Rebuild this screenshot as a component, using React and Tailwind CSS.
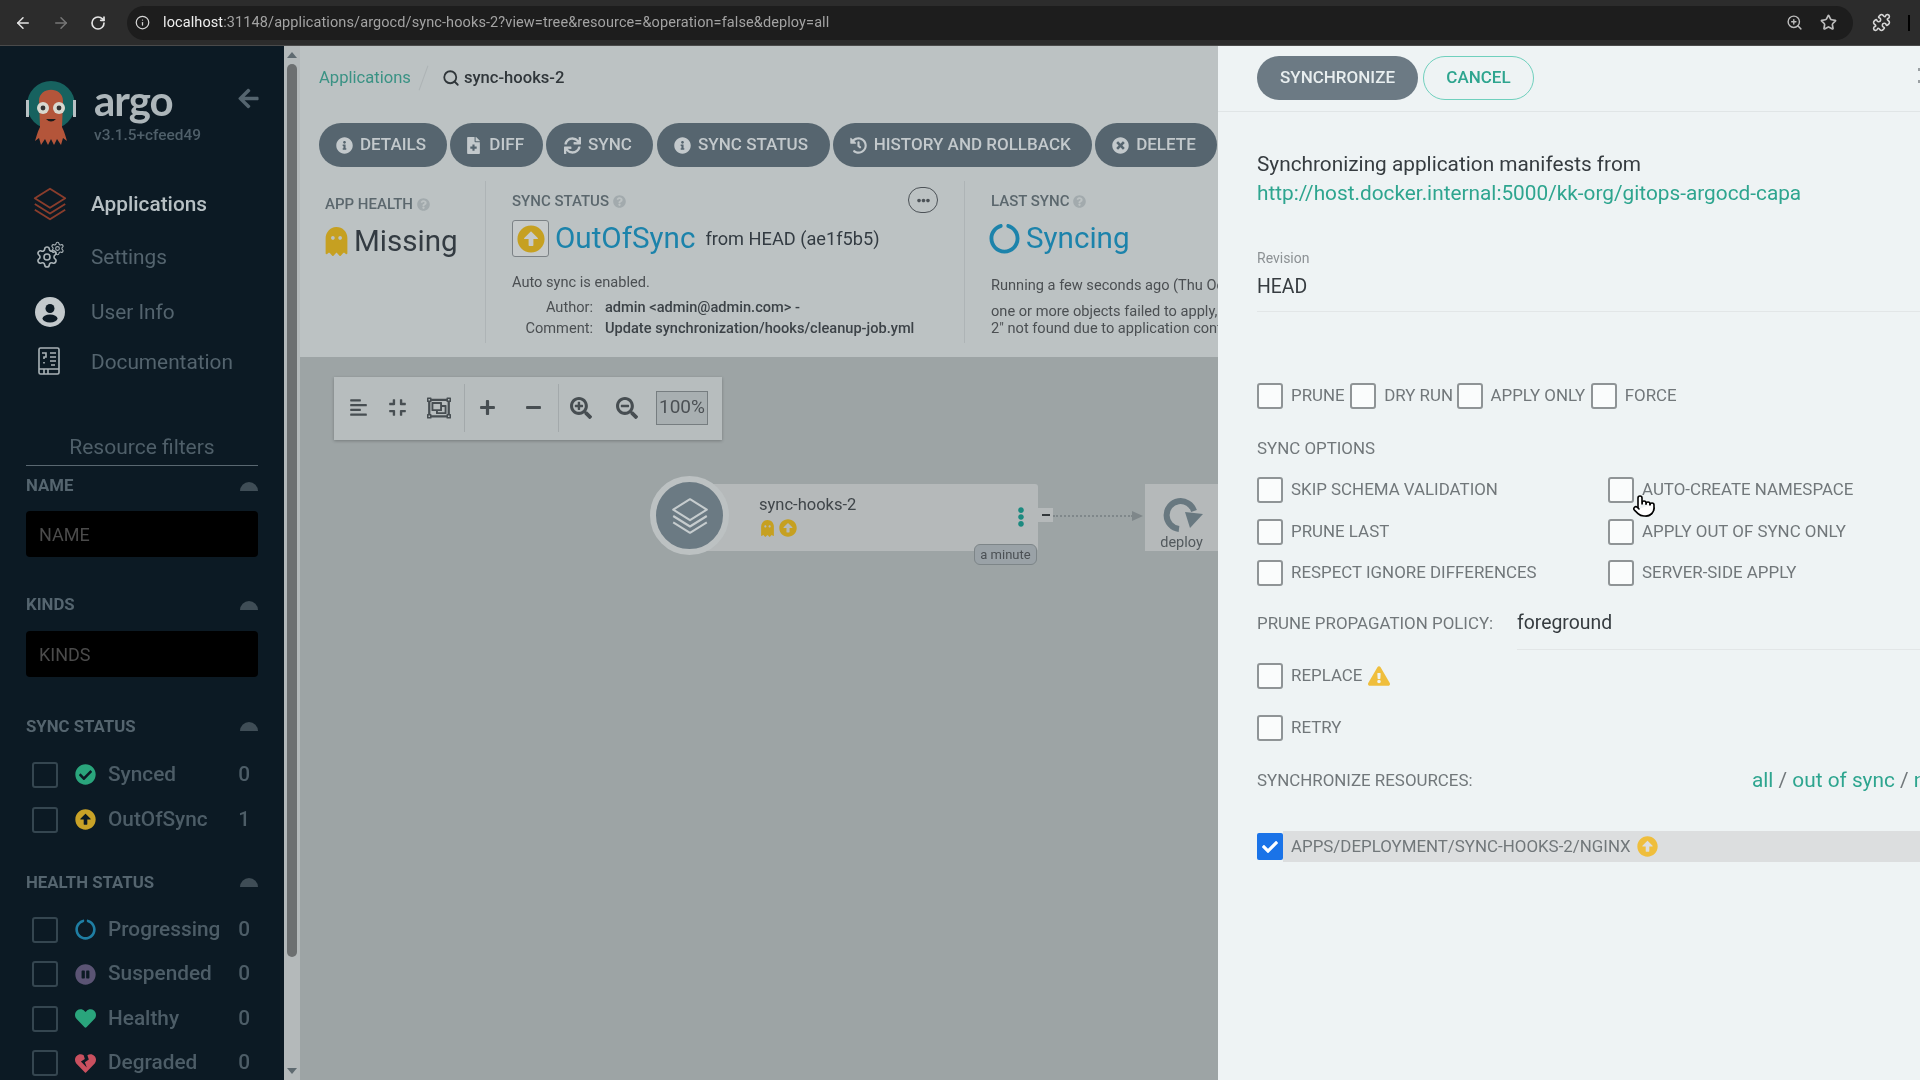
import { ArrowLeft, ArrowRight, RotateCw, Info, ZoomIn, Star, Puzzle, Search, Settings, Pointer } from 'lucide-react'
import {
  FaAlignLeft,
  FaArrowAltCircleUp,
  FaArrowLeft,
  FaCheckCircle,
  FaCheck,
  FaCircleNotch,
  FaCompress,
  FaEllipsisH,
  FaEllipsisV,
  FaExclamationTriangle,
  FaFileMedical,
  FaGhost,
  FaHeart,
  FaHeartBroken,
  FaHistory,
  FaInfoCircle,
  FaMinus,
  FaPauseCircle,
  FaPlus,
  FaQuestionCircle,
  FaRegObjectGroup,
  FaSearchMinus,
  FaSearchPlus,
  FaSync,
  FaTimesCircle,
} from 'react-icons/fa'

const ACTIONS = [
  { label: 'DETAILS', icon: FaInfoCircle, width: 'w-[128px]' },
  { label: 'DIFF', icon: FaFileMedical, width: 'w-[93px]' },
  { label: 'SYNC', icon: FaSync, width: 'w-[107px]' },
  { label: 'SYNC STATUS', icon: FaInfoCircle, width: 'w-[173px]' },
  { label: 'HISTORY AND ROLLBACK', icon: FaHistory, width: 'w-[259px]' },
  { label: 'DELETE', icon: FaTimesCircle, width: 'w-[122px]' },
]

const SYNC_FILTERS = [
  { label: 'Synced', count: 0, icon: FaCheckCircle, color: 'text-[#2aa57c]' },
  { label: 'OutOfSync', count: 1, icon: FaArrowAltCircleUp, color: 'text-[#c9a227]' },
]

const HEALTH_FILTERS = [
  { label: 'Progressing', count: 0, icon: FaCircleNotch, color: 'text-[#1f7ea3]' },
  { label: 'Suspended', count: 0, icon: FaPauseCircle, color: 'text-[#5b5474]' },
  { label: 'Healthy', count: 0, icon: FaHeart, color: 'text-[#2aa57c]' },
  { label: 'Degraded', count: 0, icon: FaHeartBroken, color: 'text-[#c9505f]' },
]

function ArgoLogo() {
  return (
    <svg width="50" height="64" viewBox="0 0 50 64" className="shrink-0">
      <circle cx="25" cy="24" r="24" fill="#17625f" />
      <rect x="0" y="19" width="3" height="17" fill="#b9c1c4" />
      <rect x="47" y="19" width="3" height="17" fill="#b9c1c4" />
      <path d="M13 20 C13 5 37 5 37 20 L36 46 C39 52 40 57 41 60 L37 57 L35 64 L31 58 L28 64 L25 58 L22 64 L19 58 L15 64 L13 57 L9 60 C10 57 11 52 14 46 Z" fill="#b4553a" />
      <circle cx="17" cy="27" r="6" fill="#d8d8cf" />
      <circle cx="33" cy="27" r="6" fill="#d8d8cf" />
      <circle cx="17" cy="27" r="2.4" fill="#333" />
      <circle cx="33" cy="27" r="2.4" fill="#333" />
      <path d="M20 38 Q25 43 30 38 Z" fill="#1a1a1a" />
    </svg>
  )
}

function LayersIcon({ className, size = 40 }) {
  return (
    <svg width={size} height={size} viewBox="0 0 40 40" fill="none" stroke="currentColor" strokeWidth="2" strokeLinejoin="round" className={className}>
      <path d="M20 4 L36 14 L20 24 L4 14 Z" />
      <path d="M4 20 L20 30 L36 20" />
      <path d="M4 26 L20 36 L36 26" />
    </svg>
  )
}

function GearsIcon() {
  return (
    <div className="relative w-[30px] h-[28px] mb-[6px] ml-[1px] text-[#aab3b7]">
      <Settings size={24} strokeWidth={1.6} className="absolute left-0 bottom-0" />
      <Settings size={15} strokeWidth={1.7} className="absolute right-0 top-0" />
    </div>
  )
}

function UserIcon() {
  return (
    <svg width="30" height="30" viewBox="0 0 30 30" className="mb-[2px] ml-[1px]">
      <circle cx="15" cy="15" r="15" fill="#c3c9cc" />
      <circle cx="15" cy="11.5" r="4.5" fill="#0c1a24" />
      <ellipse cx="15" cy="21.5" rx="7.5" ry="4" fill="#0c1a24" />
    </svg>
  )
}

function DocsIcon() {
  return (
    <svg width="22" height="28" viewBox="0 0 22 28" fill="none" stroke="#aab3b7" strokeWidth="1.6" className="mb-[4px]">
      <rect x="1" y="1" width="20" height="26" rx="1.5" />
      <path d="M1 22 H21 M6 22 V27 M10 22 V27" />
      <path d="M12 6 H18 M12 10 H18 M12 14 H18 M13 18 H17 M4 6 H8 V10 H6 V12 M6 15 V16.5" />
    </svg>
  )
}

function DeployIcon() {
  return (
    <svg width="44" height="36" viewBox="0 0 44 36" className="shrink-0">
      <path d="M19 33 A14 14 0 1 1 34 15" fill="none" stroke="#687880" strokeWidth="6" />
      <polygon points="25,16 43,18 30,32" fill="#687880" />
    </svg>
  )
}

function Caret() {
  return <div className="w-[18px] h-[9px] rounded-t-full bg-[#3f4d56]" />
}

function TopBar() {
  return (
    <div className="h-[46px] shrink-0 bg-[#2c2c2c] flex items-center border-b border-[#4a4a4a]">
      <div className="w-[127px] shrink-0 flex items-center pl-[14px] gap-[20px] text-[#e4e4e4]">
        <ArrowLeft size={18} />
        <ArrowRight size={18} className="text-[#777]" />
        <RotateCw size={16} strokeWidth={2.5} />
      </div>
      <div className="w-[1726px] h-[34px] rounded-full bg-[#1d1d1d] flex items-center pl-[7px] pr-[16px]">
        <Info size={15} className="text-[#d5d5d5] ml-[1px]" />
        <span className="ml-[13px] text-[14.5px] tracking-[0.1px] text-[#a3a3a3] whitespace-nowrap">
          <span className="text-[#eeeeee]">localhost</span>:31148/applications/argocd/sync-hooks-2?view=tree&amp;resource=&amp;operation=false&amp;deploy=all
        </span>
        <div className="ml-auto flex items-center gap-[17px] text-[#bdbdbd]">
          <ZoomIn size={17} />
          <Star size={17} strokeWidth={2.4} />
        </div>
      </div>
      <Puzzle size={19} className="ml-[19px] text-[#d5d5d5]" />
      <div className="ml-[17px] w-[2px] h-[16px] bg-black" />
    </div>
  )
}

function NavItem({ icon, label, active, className }) {
  return (
    <div className={`flex items-center h-[36px] ${className}`}>
      <div className="w-[91px] pl-[34px] shrink-0 flex items-center">{icon}</div>
      <span className={`text-[20.8px] ${active ? 'font-medium text-[#b7c0c4]' : 'text-[#54646e]'}`}>{label}</span>
    </div>
  )
}

function FilterHeader({ label, className }) {
  return (
    <div className={`flex items-center justify-between h-[20px] ${className}`}>
      <span className="text-[16.8px] font-bold text-[#55656f]">{label}</span>
      <Caret />
    </div>
  )
}

function FilterInput({ placeholder, className }) {
  return (
    <div className={`h-[46px] rounded-[4px] bg-black flex items-center pl-[13px] text-[18px] text-[#4b4b4b] ${className}`}>
      {placeholder}
    </div>
  )
}

function FilterRow({ item, className }) {
  const Icon = item.icon
  return (
    <div className={`flex items-center h-[26px] pl-[6px] pr-[8px] ${className}`}>
      <div className="w-[26px] h-[26px] rounded-[3px] border-2 border-[#354650] shrink-0" />
      <Icon size={21} className={`ml-[17px] shrink-0 ${item.color}`} />
      <span className="ml-[12px] text-[20.8px] font-medium text-[#4d5d67]">{item.label}</span>
      <span className="ml-auto text-[20.8px] font-medium text-[#4d5d67]">{item.count}</span>
    </div>
  )
}

function Sidebar() {
  return (
    <aside className="w-[284px] shrink-0 bg-[#0c1a24] flex flex-col overflow-hidden">
      <div className="h-[110px] shrink-0 pt-[35px] pl-[26px] pr-[24px] flex items-start">
        <ArgoLogo />
        <div className="ml-[18px]">
          <div className="text-[42px] leading-[38px] font-[Lato,sans-serif] font-bold text-[#adb6ba] tracking-[-1px]">argo</div>
          <div className="text-[15.4px] leading-[16px] mt-[8px] font-medium text-[#4f5f69]">v3.1.5+cfeed49</div>
        </div>
        <FaArrowLeft size={23} className="ml-auto mt-[6px] text-[#55656f]" />
      </div>

      <NavItem active className="mt-[31px]" label="Applications" icon={<LayersIcon size={38} className="-ml-[3px] mb-[3px] text-[#8a3d2c]" />} />
      <NavItem className="mt-[17px]" label="Settings" icon={<GearsIcon />} />
      <NavItem className="mt-[19px]" label="User Info" icon={<UserIcon />} />
      <NavItem className="mt-[14px]" label="Documentation" icon={<div className="pl-[4px] flex"><DocsIcon /></div>} />

      <div className="mx-[26px] mt-[52px] pb-[4px] border-b border-[#5a6871] text-center text-[21px] leading-[28px] text-[#4f5f69]">
        Resource filters
      </div>
      <div className="px-[26px]">
        <FilterHeader className="mt-[10px]" label="NAME" />
        <FilterInput className="mt-[15px]" placeholder="NAME" />
        <FilterHeader className="mt-[38px]" label="KINDS" />
        <FilterInput className="mt-[16px]" placeholder="KINDS" />
        <FilterHeader className="mt-[39.5px]" label="SYNC STATUS" />
        <FilterRow className="mt-[25px]" item={SYNC_FILTERS[0]} />
        <FilterRow className="mt-[19px]" item={SYNC_FILTERS[1]} />
        <FilterHeader className="mt-[40px]" label="HEALTH STATUS" />
        <FilterRow className="mt-[24px]" item={HEALTH_FILTERS[0]} />
        <FilterRow className="mt-[18.5px]" item={HEALTH_FILTERS[1]} />
        <FilterRow className="mt-[18.5px]" item={HEALTH_FILTERS[2]} />
        <FilterRow className="mt-[18.5px]" item={HEALTH_FILTERS[3]} />
      </div>
    </aside>
  )
}

function Scrollbar() {
  return (
    <div className="w-[16px] shrink-0 bg-[#b4b9ba] flex flex-col items-center pt-[6px]">
      <div className="w-0 h-0 border-x-[5px] border-x-transparent border-b-[6px] border-b-[#5f6a70]" />
      <div className="w-[10px] h-[893px] mt-[6px] rounded-full bg-[#6c6f70]" />
      <div className="w-0 h-0 mt-[111px] border-x-[5px] border-x-transparent border-t-[6px] border-t-[#5f6a70]" />
    </div>
  )
}

function HelpDot() {
  return <FaQuestionCircle size={13} className="ml-[4px] text-[#a2aaad]" />
}

function ActionButtons() {
  return (
    <div className="h-[57px] shrink-0 pt-[13px] pl-[19px] flex gap-[3.2px]">
      {ACTIONS.map(a => (
        <button key={a.label} className={`${a.width} h-[44px] shrink-0 rounded-full bg-[#56656f] text-[#c3c9cc] text-[17px] font-medium flex items-center justify-center gap-[7px] pr-[4px] whitespace-nowrap`}>
          <a.icon size={17} />
          {a.label}
        </button>
      ))}
    </div>
  )
}

function StatusRow() {
  return (
    <div className="h-[190px] shrink-0 flex text-[#4b4f52] overflow-hidden">
      <div className="w-[185px] shrink-0 pl-[25px]">
        <div className="mt-[27px] h-[20px] flex items-center text-[15px] font-medium text-[#5b676d]">APP HEALTH<HelpDot /></div>
        <div className="mt-[10px] h-[34px] flex items-center gap-[3px]">
          <FaGhost size={29} className="-ml-[3px] text-[#c6a021]" />
          <span className="text-[29.6px] text-[#333b42]">Missing</span>
        </div>
      </div>

      <div className="w-[479px] shrink-0 pl-[26px] pr-[26px] my-[14px] border-l border-[#aeb4b6] relative">
        <div className="mt-[10px] h-[20px] flex items-center text-[15px] font-medium text-[#5b676d]">SYNC STATUS<HelpDot /></div>
        <div className="mt-[9px] h-[37px] flex items-center">
          <div className="w-[37px] h-[37px] rounded-[3px] border border-[#7c8286] bg-[#c6cacb] flex items-center justify-center">
            <FaArrowAltCircleUp size={28} className="text-[#c6a021]" />
          </div>
          <span className="ml-[6px] text-[29.6px] text-[#1c83ab]">OutOfSync</span>
          <span className="ml-[10px] text-[18.2px] text-[#333b42]">from HEAD (ae1f5b5)</span>
        </div>
        <div className="mt-[16px] text-[14.6px] leading-[18px]">Auto sync is enabled.</div>
        <div className="mt-[7px] text-[14.6px] leading-[18px] flex">
          <span className="w-[81px] text-right">Author:</span>
          <span className="ml-[12px] font-medium text-[#3c4247]">admin &lt;admin@admin.com&gt; -</span>
        </div>
        <div className="mt-[3px] text-[14.6px] leading-[18px] flex">
          <span className="w-[81px] text-right">Comment:</span>
          <span className="ml-[12px] font-medium text-[#3c4247]">Update synchronization/hooks/cleanup-job.yml</span>
        </div>
        <div className="absolute right-[26px] top-[6px] w-[30px] h-[26px] rounded-full border border-[#4c5257] flex items-center justify-center">
          <FaEllipsisH size={13} className="text-[#4c5257]" />
        </div>
      </div>

      <div className="flex-1 pl-[26px] my-[14px] border-l border-[#aeb4b6] whitespace-nowrap">
        <div className="mt-[10px] h-[20px] flex items-center text-[15px] font-medium text-[#5b676d]">LAST SYNC<HelpDot /></div>
        <div className="mt-[9px] h-[37px] flex items-center">
          <FaCircleNotch size={31} className="-ml-[2px] text-[#1c83ab]" />
          <span className="ml-[6px] text-[29.6px] text-[#1c83ab]">Syncing</span>
        </div>
        <div className="mt-[19px] text-[14.6px] leading-[18px]">Running a few seconds ago (Thu Oct 16 2025 10:14:22)</div>
        <div className="mt-[9px] text-[14.6px] leading-[17px]">one or more objects failed to apply, reason: namespaces "sync-hooks-</div>
        <div className="text-[14.6px] leading-[17px]">2" not found due to application controller sync timeout</div>
      </div>
    </div>
  )
}

function Toolbar() {
  const icon = 'flex items-center justify-center w-[38px] h-[24px] text-[#474e52]'
  return (
    <div className="absolute left-[34px] top-[20px] w-[388px] h-[63px] bg-[#b7bdbe] shadow-[0_1px_3px_rgba(0,0,0,0.25)] flex items-center pl-[5px] pb-[2px]">
      <div className={icon}><FaAlignLeft size={19} /></div>
      <div className={`${icon} ml-[1px]`}><FaCompress size={19} /></div>
      <div className={`${icon} ml-[4px]`}><FaRegObjectGroup size={24} /></div>
      <div className="w-px h-[48px] bg-[#a3a9ab] ml-[6px] mr-[3px]" />
      <div className={icon}><FaPlus size={17} /></div>
      <div className={`${icon} ml-[8px]`}><FaMinus size={17} /></div>
      <div className="w-px h-[48px] bg-[#a3a9ab] ml-[6px] mr-[3px]" />
      <div className={icon}><FaSearchPlus size={22} /></div>
      <div className={`${icon} ml-[8px]`}><FaSearchMinus size={22} /></div>
      <div className="ml-[10px] w-[52px] h-[34px] border border-[#767d80] bg-[#a8afb1] flex items-center justify-center text-[19px] text-[#4b5054]">100%</div>
    </div>
  )
}

function Graph() {
  return (
    <div className="relative flex-1 bg-[#9da4a5] overflow-hidden">
      <Toolbar />
      {/* app node */}
      <div className="absolute left-[390px] top-[127px] w-[348px] h-[67px] bg-[#b5b9ba] rounded-[3px]">
        <div className="absolute left-[69px] top-[9px] text-[16.5px] leading-[24px] text-[#3f4549]">sync-hooks-2</div>
        <div className="absolute left-[69px] top-[35px] flex items-center gap-[3px]">
          <FaGhost size={17} className="text-[#c6a021]" />
          <FaArrowAltCircleUp size={18} className="text-[#c6a021]" />
        </div>
        <FaEllipsisV size={20} className="absolute left-[321px] top-[23px] text-[#1c8a80]" />
      </div>
      <div className="absolute left-[350px] top-[119px] w-[79px] h-[79px] rounded-full bg-[#6b7a83] border-[6px] border-[#bcc1c2] flex items-center justify-center text-[#c6ccce]">
        <LayersIcon size={42} />
      </div>
      <div className="absolute left-[738px] top-[151px] w-[15px] h-[14px] bg-[#b5b9ba] flex items-center justify-center">
        <div className="w-[8px] h-[2px] bg-[#33383b]" />
      </div>
      <div className="absolute left-[753px] top-[158px] w-[80px] border-t-2 border-dotted border-[#7f878a]" />
      <div className="absolute left-[832px] top-[154px] w-0 h-0 border-y-[5px] border-y-transparent border-l-[11px] border-l-[#7f878a]" />
      <div className="absolute left-[674px] top-[187px] w-[63px] h-[21px] rounded-[6px] border border-[#7d8588] bg-[#9aa2a7] flex items-center justify-center text-[13px] text-[#4b5054]">a minute</div>
      {/* deploy node */}
      <div className="absolute left-[845px] top-[127px] w-[73px] h-[67px] bg-[#b5b9ba] flex flex-col items-center pt-[12px]">
        <DeployIcon />
        <span className="text-[14.5px] leading-[18px] text-[#52595d] mt-[2px]">deploy</span>
      </div>
    </div>
  )
}

function MainArea() {
  return (
    <main className="w-[918px] shrink-0 flex flex-col bg-[#bcc2c3] overflow-hidden">
      <div className="h-[64px] shrink-0 flex items-center pl-[19px] text-[16.6px]">
        <span className="text-[#3a9284]">Applications</span>
        <div className="ml-[12px] h-[26px] w-px bg-[#aeb4b6] rotate-[20deg]" />
        <Search size={18} strokeWidth={2.4} className="ml-[18px] text-[#30363a]" />
        <span className="ml-[4px] font-medium text-[#30363a]">sync-hooks-2</span>
      </div>
      <ActionButtons />
      <StatusRow />
      <Graph />
    </main>
  )
}

function Check({ label, className, children, labelClass = 'ml-[8px]' }) {
  return (
    <div className={`flex items-center h-[26px] ${className || ''}`}>
      <div className="w-[26px] h-[26px] shrink-0 rounded-[3px] border-2 border-[#8f9496] bg-[#fafcfc]" />
      <span className={`${labelClass} text-[16.9px] text-[#71777a] whitespace-nowrap`}>{label}</span>
      {children}
    </div>
  )
}

function SyncPanel() {
  return (
    <section className="flex-1 min-w-0 bg-[#eef3f4] flex flex-col overflow-hidden relative">
      <div className="h-[66px] shrink-0 border-b border-[#e0e5e6] flex items-center gap-[5px] pl-[39px] pb-[2px]">
        <button className="w-[161px] h-[44px] rounded-full bg-[#6c7a84] text-[17px] font-medium text-[#e8eeef]">SYNCHRONIZE</button>
        <button className="w-[111px] h-[44px] rounded-full border border-[#6fd0bd] text-[17px] font-medium text-[#2ea58f]">CANCEL</button>
      </div>
      <div className="absolute right-0 top-[22px] flex flex-col gap-[9px]">
        <div className="w-[2px] h-[3px] bg-[#9aa0a3]" />
        <div className="w-[2px] h-[3px] bg-[#9aa0a3]" />
      </div>

      <div className="pl-[39px] flex flex-col">
        <div className="mt-[38px] text-[20.8px] leading-[29px] text-[#363c40]">Synchronizing application manifests from</div>
        <div className="text-[20.8px] leading-[29px] text-[#2ea58f]">http://host.docker.internal:5000/kk-org/gitops-argocd-capa</div>

        <div className="mt-[42px] text-[14px] leading-[16px] text-[#8c9194]">Revision</div>
        <div className="mt-[9px] pb-[12px] border-b border-[#e2e6e7] text-[19.4px] leading-[24px] text-[#363c40]">HEAD</div>

        <div className="mt-[71px] flex items-center">
          <Check label="PRUNE" />
          <Check className="ml-[5.5px]" label="DRY RUN" />
          <Check className="ml-[3.5px]" label="APPLY ONLY" />
          <Check className="ml-[5.5px]" label="FORCE" />
        </div>

        <div className="mt-[30px] text-[16.9px] leading-[18px] text-[#71777a]">SYNC OPTIONS</div>

        <div className="mt-[20px] grid grid-cols-[351px_1fr] gap-y-[15.5px]">
          <Check label="SKIP SCHEMA VALIDATION" />
          <Check label="AUTO-CREATE NAMESPACE" />
          <Check label="PRUNE LAST" />
          <Check label="APPLY OUT OF SYNC ONLY" />
          <Check label="RESPECT IGNORE DIFFERENCES" />
          <Check label="SERVER-SIDE APPLY" />
        </div>

        <div className="mt-[23px] flex items-start">
          <div className="w-[260px] shrink-0 text-[16.9px] leading-[28px] text-[#71777a]">PRUNE PROPAGATION POLICY:</div>
          <div className="flex-1 h-[41px] border-b border-[#e2e6e7] text-[19.4px] leading-[28px] text-[#363c40]">foreground</div>
        </div>

        <Check className="mt-[13px]" label="REPLACE">
          <FaExclamationTriangle size={22} className="ml-[6px] text-[#efbe3c]" />
        </Check>
        <Check className="mt-[26px]" label="RETRY" />

        <div className="mt-[28px] flex items-center h-[24px]">
          <div className="w-[495px] shrink-0 text-[16.9px] text-[#71777a]">SYNCHRONIZE RESOURCES:</div>
          <div className="text-[20.8px] text-[#71777a] whitespace-nowrap">
            <span className="text-[#2ea58f]">all</span> / <span className="text-[#2ea58f]">out of sync</span> / <span className="text-[#2ea58f]">none</span>
          </div>
        </div>

        <div className="mt-[38px] h-[31px] flex items-center">
          <div className="w-[26px] h-[27px] shrink-0 rounded-[2px] bg-[#1a73e8] flex items-center justify-center text-white">
            <FaCheck size={16} />
          </div>
          <div className="flex-1 h-full bg-[#dcdedf] flex items-center pl-[8px] text-[16.9px] text-[#71777a]">
            APPS/DEPLOYMENT/SYNC-HOOKS-2/NGINX
            <FaArrowAltCircleUp size={21} className="ml-[6px] text-[#efbe3c]" />
          </div>
        </div>
      </div>

      {/* mouse pointer */}
      <Pointer size={24} fill="white" strokeWidth={1.6} className="absolute left-[414px] top-[448px] text-black" />
    </section>
  )
}

export default function App() {
  return (
    <div className="w-[1920px] h-[1080px] overflow-hidden flex flex-col font-[Roboto,sans-serif] blur-[0.4px]">
      <TopBar />
      <div className="flex flex-1 min-h-0">
        <Sidebar />
        <Scrollbar />
        <MainArea />
        <SyncPanel />
      </div>
    </div>
  )
}
